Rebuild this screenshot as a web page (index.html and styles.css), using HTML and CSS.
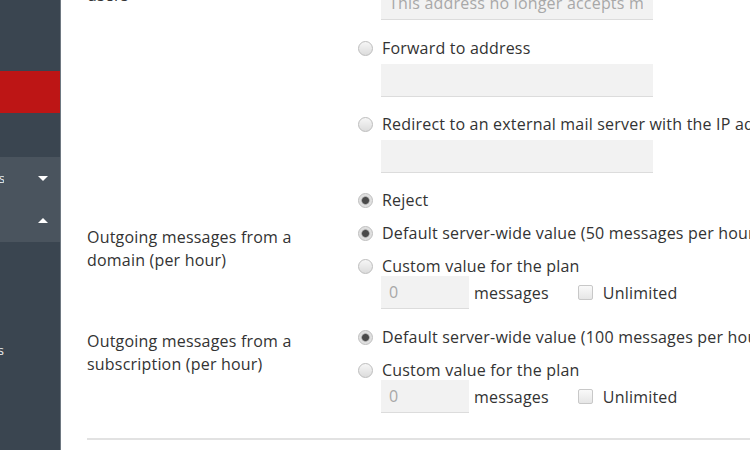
FILE: index.html
```html
<!DOCTYPE html>
<html lang="en">
<head>
<meta charset="utf-8">
<title>Service Plan – Mail</title>
<link rel="stylesheet" href="styles.css">
</head>
<body>
<div class="app">
  <aside class="sidebar">
    <nav class="nav">
      <div class="nav-item"></div>
      <div class="nav-item active"></div>
      <div class="nav-item tall"></div>
      <div class="nav-group">
        <div class="nav-item"><span class="nav-label edge">Websites &amp; Domains</span><span class="caret down"></span></div>
        <div class="nav-item tall1"><span class="caret up"></span></div>
      </div>
      <div class="nav-item tall"></div>
      <div class="nav-item tall1"></div>
      <div class="nav-item"><span class="nav-label edge">Tools &amp; Settings</span></div>
      <div class="nav-item"></div>
    </nav>
  </aside>

  <main class="main">
    <div class="form">
      <div class="row">
        <div class="label first">Mail to nonexistent<br>users</div>
        <div class="field">
          <div class="opt"><span class="radio"></span>Bounce with message</div>
          <div class="input wide after-opt"><span class="ph">This address no longer accepts mail.</span></div>
          <div class="opt after-input first-gap"><span class="radio"></span>Forward to address</div>
          <div class="input wide after-opt"></div>
          <div class="opt after-input"><span class="radio"></span>Redirect to an external mail server with the IP address</div>
          <div class="input wide after-opt"></div>
          <div class="opt after-input"><span class="radio checked"></span>Reject</div>
        </div>
      </div>

      <div class="row row-tight">
        <div class="label">Outgoing messages from a domain (per hour)</div>
        <div class="field">
          <div class="opt"><span class="radio checked"></span>Default server-wide value (50 messages per hour)</div>
          <div class="opt next"><span class="radio"></span>Custom value for the plan</div>
          <div class="limit">
            <div class="input small"><span class="ph">0</span></div>
            <span class="unit">messages</span>
            <span class="check"></span>
            <span class="check-text">Unlimited</span>
          </div>
        </div>
      </div>

      <div class="row row-loose">
        <div class="label">Outgoing messages from a subscription (per hour)</div>
        <div class="field">
          <div class="opt"><span class="radio checked"></span>Default server-wide value (100 messages per hour)</div>
          <div class="opt next"><span class="radio"></span>Custom value for the plan</div>
          <div class="limit">
            <div class="input small"><span class="ph">0</span></div>
            <span class="unit">messages</span>
            <span class="check"></span>
            <span class="check-text">Unlimited</span>
          </div>
        </div>
      </div>

      <div class="divider"></div>
    </div>
  </main>
</div>
</body>
</html>
```

FILE: styles.css
```css
html, body {
  margin: 0;
  padding: 0;
  background: #ffffff;
}

body {
  font-family: "Open Sans", "Liberation Sans", sans-serif;
  font-size: 16px;
  letter-spacing: 0.2px;
  color: #333333;
  overflow: hidden;
}

.app {
  display: flex;
  height: 450px;
  overflow: hidden;
}

/* ---------- sidebar ---------- */
.sidebar {
  flex: none;
  width: 200px;
  margin-left: -140px;
  background: #3a4550;
  border-right: 1px solid #6e7881;
  overflow: hidden;
}

.nav {
  padding-top: 29px;
}

.nav-item {
  height: 42px;
  display: flex;
  align-items: center;
  padding: 0 12px 0 20px;
  color: #eef0f2;
  font-size: 13px;
  letter-spacing: 0;
  white-space: nowrap;
}

.nav-label.edge {
  flex: none;
  width: 124px;
  text-align: right;
  overflow: hidden;
}

.nav-item.tall {
  height: 44px;
}

.nav-item.tall1 {
  height: 43px;
}

.nav-item.active {
  background: #bd1515;
}

.nav-group {
  background: #4a545e;
}

.caret {
  margin-left: auto;
  width: 0;
  height: 0;
  border-left: 5px solid transparent;
  border-right: 5px solid transparent;
}

.caret.down {
  border-top: 5px solid #ffffff;
}

.caret.up {
  border-bottom: 5px solid #ffffff;
}

/* ---------- main form ---------- */
.main {
  flex: 1;
  min-width: 0;
  overflow: hidden;
  padding-left: 26px;
}

.form {
  margin-top: -39px;
  width: 900px;
}

.row {
  display: flex;
}

.row-tight {
  margin-top: 13px;
}

.row-loose {
  margin-top: 18px;
}

.label {
  flex: none;
  width: 271px;
  box-sizing: border-box;
  padding: 3px 30px 0 0;
  line-height: 23px;
}

.label.first {
  padding-top: 0;
}

.field {
  flex: none;
  display: flex;
  flex-direction: column;
  align-items: flex-start;
  white-space: nowrap;
}

.opt {
  display: flex;
  align-items: center;
  gap: 9px;
  height: 20px;
  line-height: 20px;
}

.opt.next {
  margin-top: 13px;
}

.opt.after-input {
  margin-top: 17px;
}

.opt.first-gap {
  margin-top: 18px;
}

.radio {
  flex: none;
  width: 15px;
  height: 15px;
  box-sizing: border-box;
  border-radius: 50%;
  border: 1px solid #bdbdbd;
  background: linear-gradient(#f6f6f6, #dcdcdc);
}

.radio.checked {
  background: radial-gradient(circle, #4a4a4a 0 3px, #8a8a8a 3.6px, #dcdcdc 4.5px, #ececec 100%);
}

.input {
  height: 33px;
  box-sizing: border-box;
  background: #f2f2f2;
  border-bottom: 1px solid #dcdcdc;
  padding: 0 10px 0 8px;
  line-height: 32px;
  white-space: nowrap;
}

.input.wide {
  width: 272px;
  margin-left: 23px;
}

.input.after-opt {
  margin-top: 6px;
}

.input.small {
  width: 88px;
}

.ph {
  display: block;
  overflow: hidden;
  color: #a8a8a8;
}

.limit {
  display: flex;
  align-items: center;
  margin-left: 23px;
}

.unit {
  margin-left: 5px;
}

.check {
  flex: none;
  width: 15px;
  height: 15px;
  box-sizing: border-box;
  margin-left: 29px;
  border: 1px solid #c8c8c8;
  border-radius: 2px;
  background: linear-gradient(#f9f9f9, #e6e6e6);
}

.check-text {
  margin-left: 10px;
}

.divider {
  margin-top: 25px;
  border-top: 2px solid #e2e2e2;
}
```
